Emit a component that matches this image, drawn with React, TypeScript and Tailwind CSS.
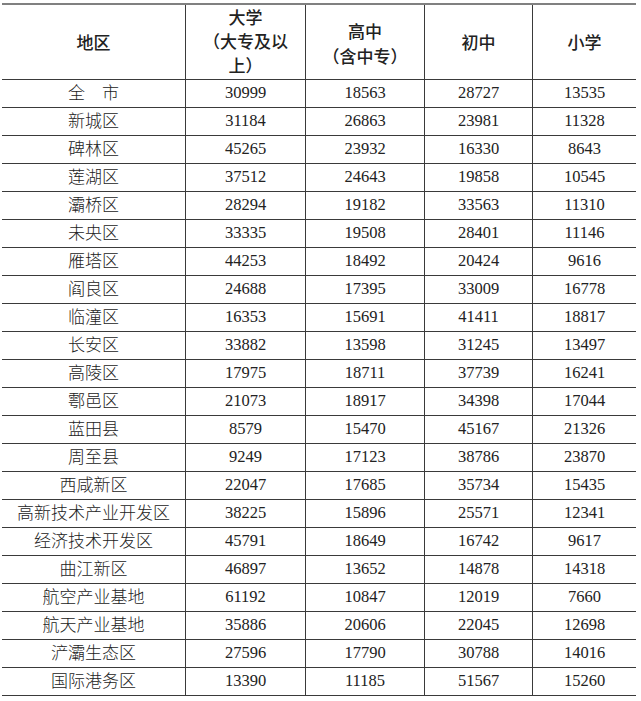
const rows: [string, string, string, string, string][] = [
  ["全　市", "30999", "18563", "28727", "13535"],
  ["新城区", "31184", "26863", "23981", "11328"],
  ["碑林区", "45265", "23932", "16330", "8643"],
  ["莲湖区", "37512", "24643", "19858", "10545"],
  ["灞桥区", "28294", "19182", "33563", "11310"],
  ["未央区", "33335", "19508", "28401", "11146"],
  ["雁塔区", "44253", "18492", "20424", "9616"],
  ["阎良区", "24688", "17395", "33009", "16778"],
  ["临潼区", "16353", "15691", "41411", "18817"],
  ["长安区", "33882", "13598", "31245", "13497"],
  ["高陵区", "17975", "18711", "37739", "16241"],
  ["鄠邑区", "21073", "18917", "34398", "17044"],
  ["蓝田县", "8579", "15470", "45167", "21326"],
  ["周至县", "9249", "17123", "38786", "23870"],
  ["西咸新区", "22047", "17685", "35734", "15435"],
  ["高新技术产业开发区", "38225", "15896", "25571", "12341"],
  ["经济技术开发区", "45791", "18649", "16742", "9617"],
  ["曲江新区", "46897", "13652", "14878", "14318"],
  ["航空产业基地", "61192", "10847", "12019", "7660"],
  ["航天产业基地", "35886", "20606", "22045", "12698"],
  ["浐灞生态区", "27596", "17790", "30788", "14016"],
  ["国际港务区", "13390", "11185", "51567", "15260"],
];

export default function App() {
  return (
    <div className="w-[641px] h-[701px] bg-white pt-[3px] pl-[2px] text-[#222] font-['Liberation_Serif','Noto_Sans_CJK_SC',serif]">
      <div className="w-[634px] border-t-2 border-[#808080] grid grid-cols-[183px_120px_119px_108px_104px]">
        {/* header */}
        <div className="h-[75px] border-b border-[#3a3a3a] flex items-center justify-center font-['Noto_Sans_CJK_SC',sans-serif] text-[17px] font-medium">
          地区
        </div>
        <div className="h-[75px] border-b border-l border-[#3a3a3a] flex items-center justify-center text-center font-['Noto_Sans_CJK_SC',sans-serif] text-[17px] leading-[24px] font-medium">
          <div className="-mt-[2px]">
            大学
            <br />
            （大专及以
            <br />
            上）
          </div>
        </div>
        <div className="h-[75px] border-b border-l border-[#3a3a3a] flex items-center justify-center text-center font-['Noto_Sans_CJK_SC',sans-serif] text-[17px] leading-[25px] font-medium">
          <div className="mt-[2px]">
            高中
            <br />
            （含中专）
          </div>
        </div>
        <div className="h-[75px] border-b border-l border-[#3a3a3a] flex items-center justify-center font-['Noto_Sans_CJK_SC',sans-serif] text-[17px] font-medium">
          初中
        </div>
        <div className="h-[75px] border-b border-l border-[#3a3a3a] flex items-center justify-center font-['Noto_Sans_CJK_SC',sans-serif] text-[17px] font-medium">
          小学
        </div>

        {rows.map((r, i) =>
          r.map((cell, j) => (
            <div
              key={i + "-" + j}
              className={
                j === 0
                  ? "h-[28px] border-b border-[#3a3a3a] flex items-center justify-center text-[17px] font-light whitespace-nowrap"
                  : "h-[28px] border-b border-l border-[#3a3a3a] flex items-center justify-center text-[16.5px]"
              }
            >
              {cell}
            </div>
          ))
        )}
      </div>
    </div>
  );
}
